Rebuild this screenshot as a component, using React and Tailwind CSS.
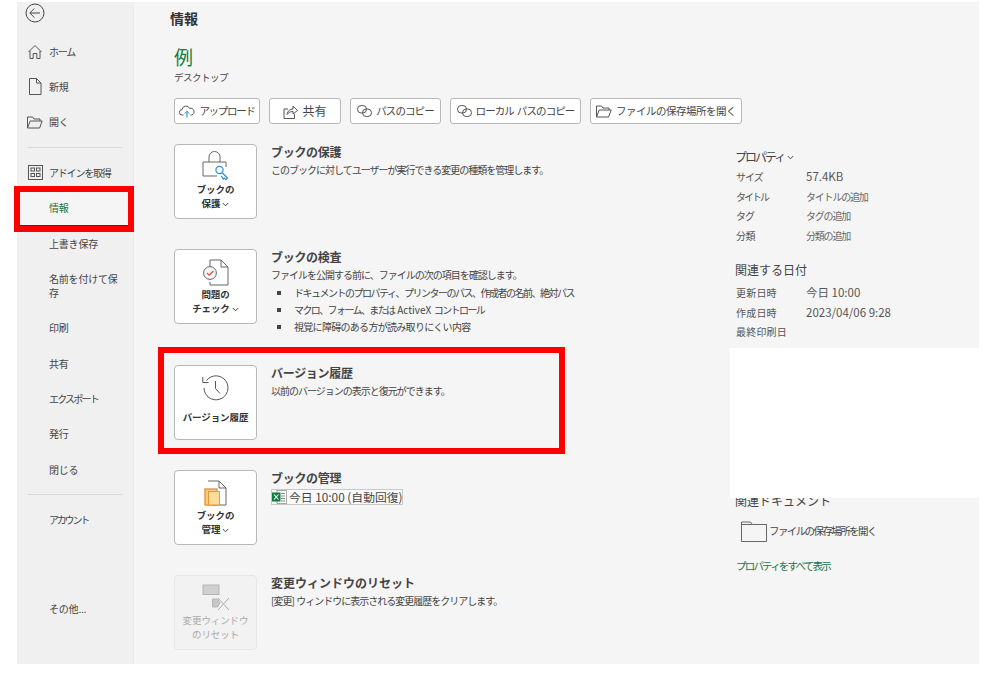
import React from 'react';

const jp = "font-['Noto_Sans_CJK_JP','Noto_Sans',sans-serif]";

const Chevron = ({ className = '' }) => (
  <svg width="7" height="5" viewBox="0 0 7 5" className={`inline-block ${className}`} fill="none" stroke="currentColor" strokeWidth="0.9">
    <path d="M0.8 1 3.5 3.8 6.2 1" />
  </svg>
);

const BackIcon = () => (
  <svg width="20" height="20" viewBox="0 0 20 20" fill="none" stroke="#444" strokeWidth="1">
    <circle cx="10" cy="10" r="9" />
    <path d="M15 10H5M9.2 5.6 4.8 10l4.4 4.4" />
  </svg>
);
const HomeIcon = () => (
  <svg width="16" height="16" viewBox="0 0 16 16" fill="none" stroke="#555" strokeWidth="1">
    <path d="M1.5 8 8 1.5 14.5 8M3 6.8V14.5h3.2v-5h3.6v5H13V6.8" />
  </svg>
);
const NewIcon = () => (
  <svg width="14" height="17" viewBox="0 0 14 17" fill="none" stroke="#555" strokeWidth="1">
    <path d="M1.5.5h7l4.5 4.5v11.5H1.5zM8.5.5V5H13" />
  </svg>
);
const OpenIcon = () => (
  <svg width="16" height="13" viewBox="0 0 16 13" fill="none" stroke="#555" strokeWidth="1">
    <path d="M.5 12V1h5l1.5 2h6v2M.5 12 3.2 5h12l-2.6 7z" />
  </svg>
);
const AddinIcon = () => (
  <svg width="15" height="15" viewBox="0 0 15 15" fill="none" stroke="#555" strokeWidth="1">
    <rect x=".5" y=".5" width="14" height="14" />
    <rect x="3" y="3" width="3.5" height="3" />
    <rect x="8.5" y="3" width="3.5" height="3" />
    <rect x="3" y="8.5" width="3.5" height="3" />
    <rect x="8.5" y="8.5" width="3.5" height="3" />
  </svg>
);
const UploadIcon = () => (
  <svg width="16" height="13" viewBox="0 0 16 13" fill="none" strokeWidth="1">
    <path d="M4.5 10H3.2A2.7 2.7 0 0 1 3 4.6 4 4 0 0 1 10.6 3.4 3.4 3.4 0 0 1 12.5 10h-1" stroke="#555" />
    <path d="M8 12.5V6.5M5.8 8.5 8 6.3l2.2 2.2" stroke="#1e88d2" />
  </svg>
);
const ShareIcon = () => (
  <svg width="15" height="15" viewBox="0 0 15 15" fill="none" stroke="#555" strokeWidth="1">
    <path d="M5 5H1v9.5h10.5V10M4 10.5C4.5 7 7 5 10 5V2l4.5 4.5L10 10V7.5c-2.5 0-4.5 1-6 3z" />
  </svg>
);
const LinkIcon = () => (
  <svg width="15" height="12" viewBox="0 0 15 12" fill="none" stroke="#555" strokeWidth="1">
    <rect x=".5" y=".5" width="9" height="7.5" rx="3.7" />
    <rect x="5.5" y="4" width="9" height="7.5" rx="3.7" />
  </svg>
);

const LockIcon = () => (
  <svg width="28" height="32" viewBox="0 0 28 32" fill="none">
    <path d="M7 12V7a5.5 5.5 0 0 1 11 0v5" stroke="#666" strokeWidth="1" />
    <path d="M15 26H1V12h23v5" stroke="#666" strokeWidth="1" />
    <circle cx="17.5" cy="20" r="3.6" stroke="#2d8fd0" strokeWidth="1.2" />
    <path d="m20 22.5 5.5 5.5-1.6 1.6-1.6-1.6-1 1-2-3" stroke="#2d8fd0" strokeWidth="1.2" />
  </svg>
);
const CheckDocIcon = () => (
  <svg width="28" height="27" viewBox="0 0 28 27" fill="none" className="mb-[1px]">
    <path d="M8 8V1h11l7 7v18H8v-3" stroke="#666" strokeWidth="1" />
    <path d="M19 1v7h7" stroke="#666" strokeWidth="1" />
    <circle cx="8" cy="14" r="6.4" fill="#f5f5f5" stroke="#666" strokeWidth="1" />
    <path d="m5 14 2.2 2.2L11.4 12" stroke="#e04a3f" strokeWidth="1.2" />
  </svg>
);
const HistoryIcon = () => (
  <svg width="27" height="27" viewBox="0 0 27 27" fill="none" stroke="#555" strokeWidth="1" className="mb-[2px]">
    <path d="M4.5 6.5A12 12 0 1 1 2 14" />
    <path d="M.8 3v5.5h5.7M13.5 7v7.5l4.5 5" />
  </svg>
);
const ManageIcon = () => (
  <svg width="23" height="26" viewBox="0 0 23 26" fill="none" className="mb-[2px]">
    <path d="M4 1h11l7 7v17H8" stroke="#666" strokeWidth="1" />
    <path d="M15 1v7h7" stroke="#666" strokeWidth="1" />
    <rect x="1" y="9" width="12" height="16" fill="#f6c98a" stroke="#e8973a" strokeWidth="1.4" />
    <rect x="4.5" y="11.5" width="11" height="13.5" fill="#fbdc99" stroke="#e8973a" strokeWidth="1" />
  </svg>
);
const ResetIcon = () => (
  <svg width="28" height="27" viewBox="0 0 28 27" fill="none" className="mb-[2px]">
    <rect x="1" y="1" width="16" height="9.5" fill="#d0d0d0" stroke="#b5b5b5" />
    <path d="M10.5 15h5l2.5 4-2.5 4h-5z" fill="#c8c8c8" stroke="#b5b5b5" />
    <path d="m16 14 11 12M27 14 16 26" stroke="#adadad" />
  </svg>
);
const ExcelIcon = () => (
  <svg width="15" height="14" viewBox="0 0 15 14" fill="none" className="shrink-0">
    <rect x="5" y=".5" width="9.5" height="13" fill="#fff" stroke="#a8a8a8" />
    <path d="M9 3.5h4M9 6h4M9 8.5h4M9 11h4" stroke="#888" />
    <rect x="0" y="2.5" width="8.5" height="9" fill="#107c41" />
    <path d="m2 4.5 4.5 5M6.5 4.5 2 9.5" stroke="#fff" strokeWidth="1.1" />
  </svg>
);
const FolderIcon = () => (
  <svg width="26" height="21" viewBox="0 0 26 21" fill="none" stroke="#666" strokeWidth="1">
    <path d="M.5 20.5V1h9l2 2.5h14v17zM.5 3.5h11" />
  </svg>
);

function NavItem({ icon, active, children, tall, track = 'tracking-[-0.2px]' }) {
  return (
    <div className={`flex items-center pl-[7px] pr-[14px] ${tall ? 'h-[49px]' : 'h-[35.3px]'} ${active ? 'text-[#217346]' : 'text-[#444]'}`}>
      <span className="flex w-[22px] shrink-0 items-center justify-center">{icon}</span>
      <span className={`ml-[3px] text-[10px] leading-[14px] ${track}`}>{children}</span>
    </div>
  );
}

function ToolButton({ icon, width, track = 'text-[10.5px] tracking-[-0.9px]', children }) {
  return (
    <div className={`flex h-[26px] shrink-0 items-center justify-center gap-[4px] rounded-[3px] border border-[#b8b8b8] bg-white whitespace-nowrap text-[#444] ${track} ${width}`}>
      {icon}
      <span>{children}</span>
    </div>
  );
}

function ActionRow({ icon, label, title, disabled, className = '', titleTrack = 'tracking-[-0.3px]', children }) {
  return (
    <div className={`flex h-[75px] ${className}`}>
      <div className={`flex h-[75px] w-[83px] shrink-0 flex-col items-center rounded-[4px] border ${disabled ? 'border-[#e6e6e6] bg-[#f2f2f2] text-[#a9a9a9]' : 'border-[#b8b8b8] bg-white text-[#333] font-bold'}`}>
        <div className="flex h-[37px] items-end">{icon}</div>
        <div className="text-center text-[9.5px] leading-[14px] tracking-[-0.1px]">{label}</div>
      </div>
      <div className="ml-[14px]">
        <div className={`text-[12px] leading-[16px] font-bold text-[#444] ${titleTrack}`}>{title}</div>
        {children}
      </div>
    </div>
  );
}

const Desc = ({ children }) => (
  <div className="mt-[3px] text-[10px] leading-[14px] tracking-[-1px] text-[#444]">{children}</div>
);

const Bullet = ({ track, children }) => (
  <div className={`flex h-[17px] items-center pl-[6px] text-[10px] whitespace-nowrap text-[#444] ${track}`}>
    <span className="h-[4px] w-[4px] bg-[#444]" />
    <span className="ml-[13px]">{children}</span>
  </div>
);

function PropRow({ name, value, nameTrack = 'tracking-[-0.4px]', valueClass = '' }) {
  return (
    <div className="flex h-[19.5px] items-center text-[10px] text-[#555]">
      <span className={`w-[71px] shrink-0 pl-[1px] ${nameTrack}`}>{name}</span>
      <span className={valueClass}>{value}</span>
    </div>
  );
}

export default function App() {
  return (
    <div className={`relative h-[676px] w-[997px] overflow-hidden bg-white pt-[2px] pl-[17px] ${jp}`}>
      <div className="flex h-[662px] w-[962px] bg-[#f5f5f5]">
        {/* Sidebar */}
        <div className="w-[117px] shrink-0 border-r border-[#ebebeb] bg-[#f0f0f0]">
          <div className="flex h-[32px] items-start pl-[8px] pt-[1px]"><BackIcon /></div>
          <NavItem icon={<HomeIcon />} track="tracking-[-1.2px]">ホーム</NavItem>
          <NavItem icon={<NewIcon />}>新規</NavItem>
          <NavItem icon={<OpenIcon />}>開く</NavItem>
          <div className="mx-[11px] my-[7px] h-px bg-[#d9d9d9]" />
          <NavItem icon={<AddinIcon />} track="tracking-[-1.2px]">アドインを取得</NavItem>
          <div className="mr-[5px] border-b border-[#333] bg-[#f5f5f5]">
            <NavItem active>情報</NavItem>
          </div>
          <NavItem>上書き保存</NavItem>
          <NavItem tall>名前を付けて保存</NavItem>
          <NavItem>印刷</NavItem>
          <NavItem>共有</NavItem>
          <NavItem track="tracking-[-1.8px]">エクスポート</NavItem>
          <NavItem>発行</NavItem>
          <NavItem>閉じる</NavItem>
          <div className="mx-[11px] my-[7px] h-px bg-[#d9d9d9]" />
          <NavItem track="tracking-[-2.2px]">アカウント</NavItem>
          <div className="h-[54px]" />
          <NavItem>その他...</NavItem>
        </div>

        {/* Main column */}
        <div className="w-[595px] shrink-0 pl-[40px]">
          <div className="-ml-[4px] pt-[6px] text-[14px] leading-[20px] font-bold text-[#333]">情報</div>
          <div className="mt-[16px] text-[19px] leading-[26px] text-[#107c41]">例</div>
          <div className="text-[9.5px] leading-[14px] tracking-[-0.5px] text-[#444]">デスクトップ</div>
          <div className="mt-[14px] flex gap-[9px]">
            <ToolButton icon={<UploadIcon />} width="w-[86px]" track="text-[10.5px] tracking-[-1.3px]">アップロード</ToolButton>
            <ToolButton icon={<ShareIcon />} width="w-[72px]" track="text-[12px] tracking-[0px]">共有</ToolButton>
            <ToolButton icon={<LinkIcon />} width="w-[91px]">パスのコピー</ToolButton>
            <ToolButton icon={<LinkIcon />} width="w-[131px]">ローカル&nbsp; パスのコピー</ToolButton>
            <ToolButton icon={<OpenIcon />} width="w-[152px]" track="text-[10.5px] tracking-[-0.5px]">ファイルの保存場所を開く</ToolButton>
          </div>

          <ActionRow
            className="mt-[20px]"
            icon={<LockIcon />}
            title="ブックの保護"
            label={<>ブックの<br />保護 <Chevron /></>}
          >
            <Desc>このブックに対してユーザーが実行できる変更の種類を管理します。</Desc>
          </ActionRow>
          <ActionRow
            className="mt-[30px]"
            icon={<CheckDocIcon />}
            title="ブックの検査"
            label={<>問題の<br />チェック <Chevron /></>}
          >
            <Desc>ファイルを公開する前に、ファイルの次の項目を確認します。</Desc>
            <div className="mt-[2px]">
              <Bullet track="tracking-[-1.5px]">ドキュメントのプロパティ、プリンターのパス、作成者の名前、絶対パス</Bullet>
              <Bullet track="tracking-[-1.6px]">マクロ、フォーム、または <span className="px-[2px] tracking-[0px]">ActiveX</span> コントロール</Bullet>
              <Bullet track="tracking-[-0.7px]">視覚に障碍のある方が読み取りにくい内容</Bullet>
            </div>
          </ActionRow>
          <ActionRow
            className="mt-[41px]"
            icon={<HistoryIcon />}
            title="バージョン履歴"
            label={<span className="mt-[7px] block">バージョン履歴</span>}
          >
            <Desc>以前のバージョンの表示と復元ができます。</Desc>
          </ActionRow>
          <ActionRow
            className="mt-[30px]"
            icon={<ManageIcon />}
            title="ブックの管理"
            label={<>ブックの<br />管理 <Chevron /></>}
          >
            <div className="mt-[3px] flex h-[16px] w-[132px] items-center gap-[2px] border border-[#c8c8c8] bg-[#fafafa] text-[11.8px] leading-[14px] whitespace-nowrap text-[#444]">
              <ExcelIcon />
              <span>今日 10:00 (自動回復)</span>
            </div>
          </ActionRow>
          <ActionRow
            disabled
            className="mt-[30px]"
            icon={<ResetIcon />}
            title="変更ウィンドウのリセット"
            titleTrack="tracking-[0px]"
            label={<>変更ウィンドウ<br />のリセット</>}
          >
            <Desc>[変更]&nbsp; ウィンドウに表示される変更履歴をクリアします。</Desc>
          </ActionRow>
        </div>

        {/* Properties column */}
        <div className="flex-1 pl-[6px]">
          <div className="mt-[146px] flex items-center gap-[3px] text-[12px] leading-[18px] tracking-[-2px] text-[#444]">プロパティ <Chevron /></div>
          <div className="mt-[1px]">
            <PropRow name="サイズ" value="57.4KB" nameTrack="tracking-[-1px]" valueClass="text-[11.5px]" />
            <PropRow name="タイトル" value="タイトルの追加" nameTrack="tracking-[-2px]" valueClass="tracking-[-1.2px] text-[#666]" />
            <PropRow name="タグ" value="タグの追加" nameTrack="tracking-[-1px]" valueClass="tracking-[-1.2px] text-[#666]" />
            <PropRow name="分類" value="分類の追加" nameTrack="tracking-[-0.4px]" valueClass="tracking-[-1.2px] text-[#666]" />
          </div>
          <div className="mt-[16px] text-[12px] leading-[18px] text-[#444]">関連する日付</div>
          <div className="mt-[4px]">
            <PropRow name="更新日時" value="今日 10:00" nameTrack="tracking-[0.2px]" valueClass="text-[11.5px]" />
            <PropRow name="作成日時" value="2023/04/06 9:28" nameTrack="tracking-[0.2px]" valueClass="text-[11.5px]" />
            <PropRow name="最終印刷日" value="" nameTrack="tracking-[0.2px]" />
          </div>
          <div className="mt-[150px] text-[12px] leading-[18px] text-[#444]">関連ドキュメント</div>
          <div className="mt-[11px] flex items-center gap-[2px] pl-[6px] text-[10.5px] tracking-[-1.6px] text-[#444]">
            <FolderIcon />
            <span>ファイルの保存場所を開く</span>
          </div>
          <div className="mt-[16px] pl-[1px] text-[10.5px] tracking-[-1.8px] text-[#217346]">プロパティをすべて表示</div>
        </div>
      </div>

      {/* Overlays pasted over the screenshot */}
      <div className="absolute top-[348px] left-[730px] h-[150px] w-[249px] bg-white" />
      <div className="absolute top-[186px] left-[14px] h-[46px] w-[120px] border-[6px] border-[#ff0000]" />
      <div className="absolute top-[347px] left-[158px] h-[107px] w-[407px] border-[6px] border-[#ff0000]" />
    </div>
  );
}
